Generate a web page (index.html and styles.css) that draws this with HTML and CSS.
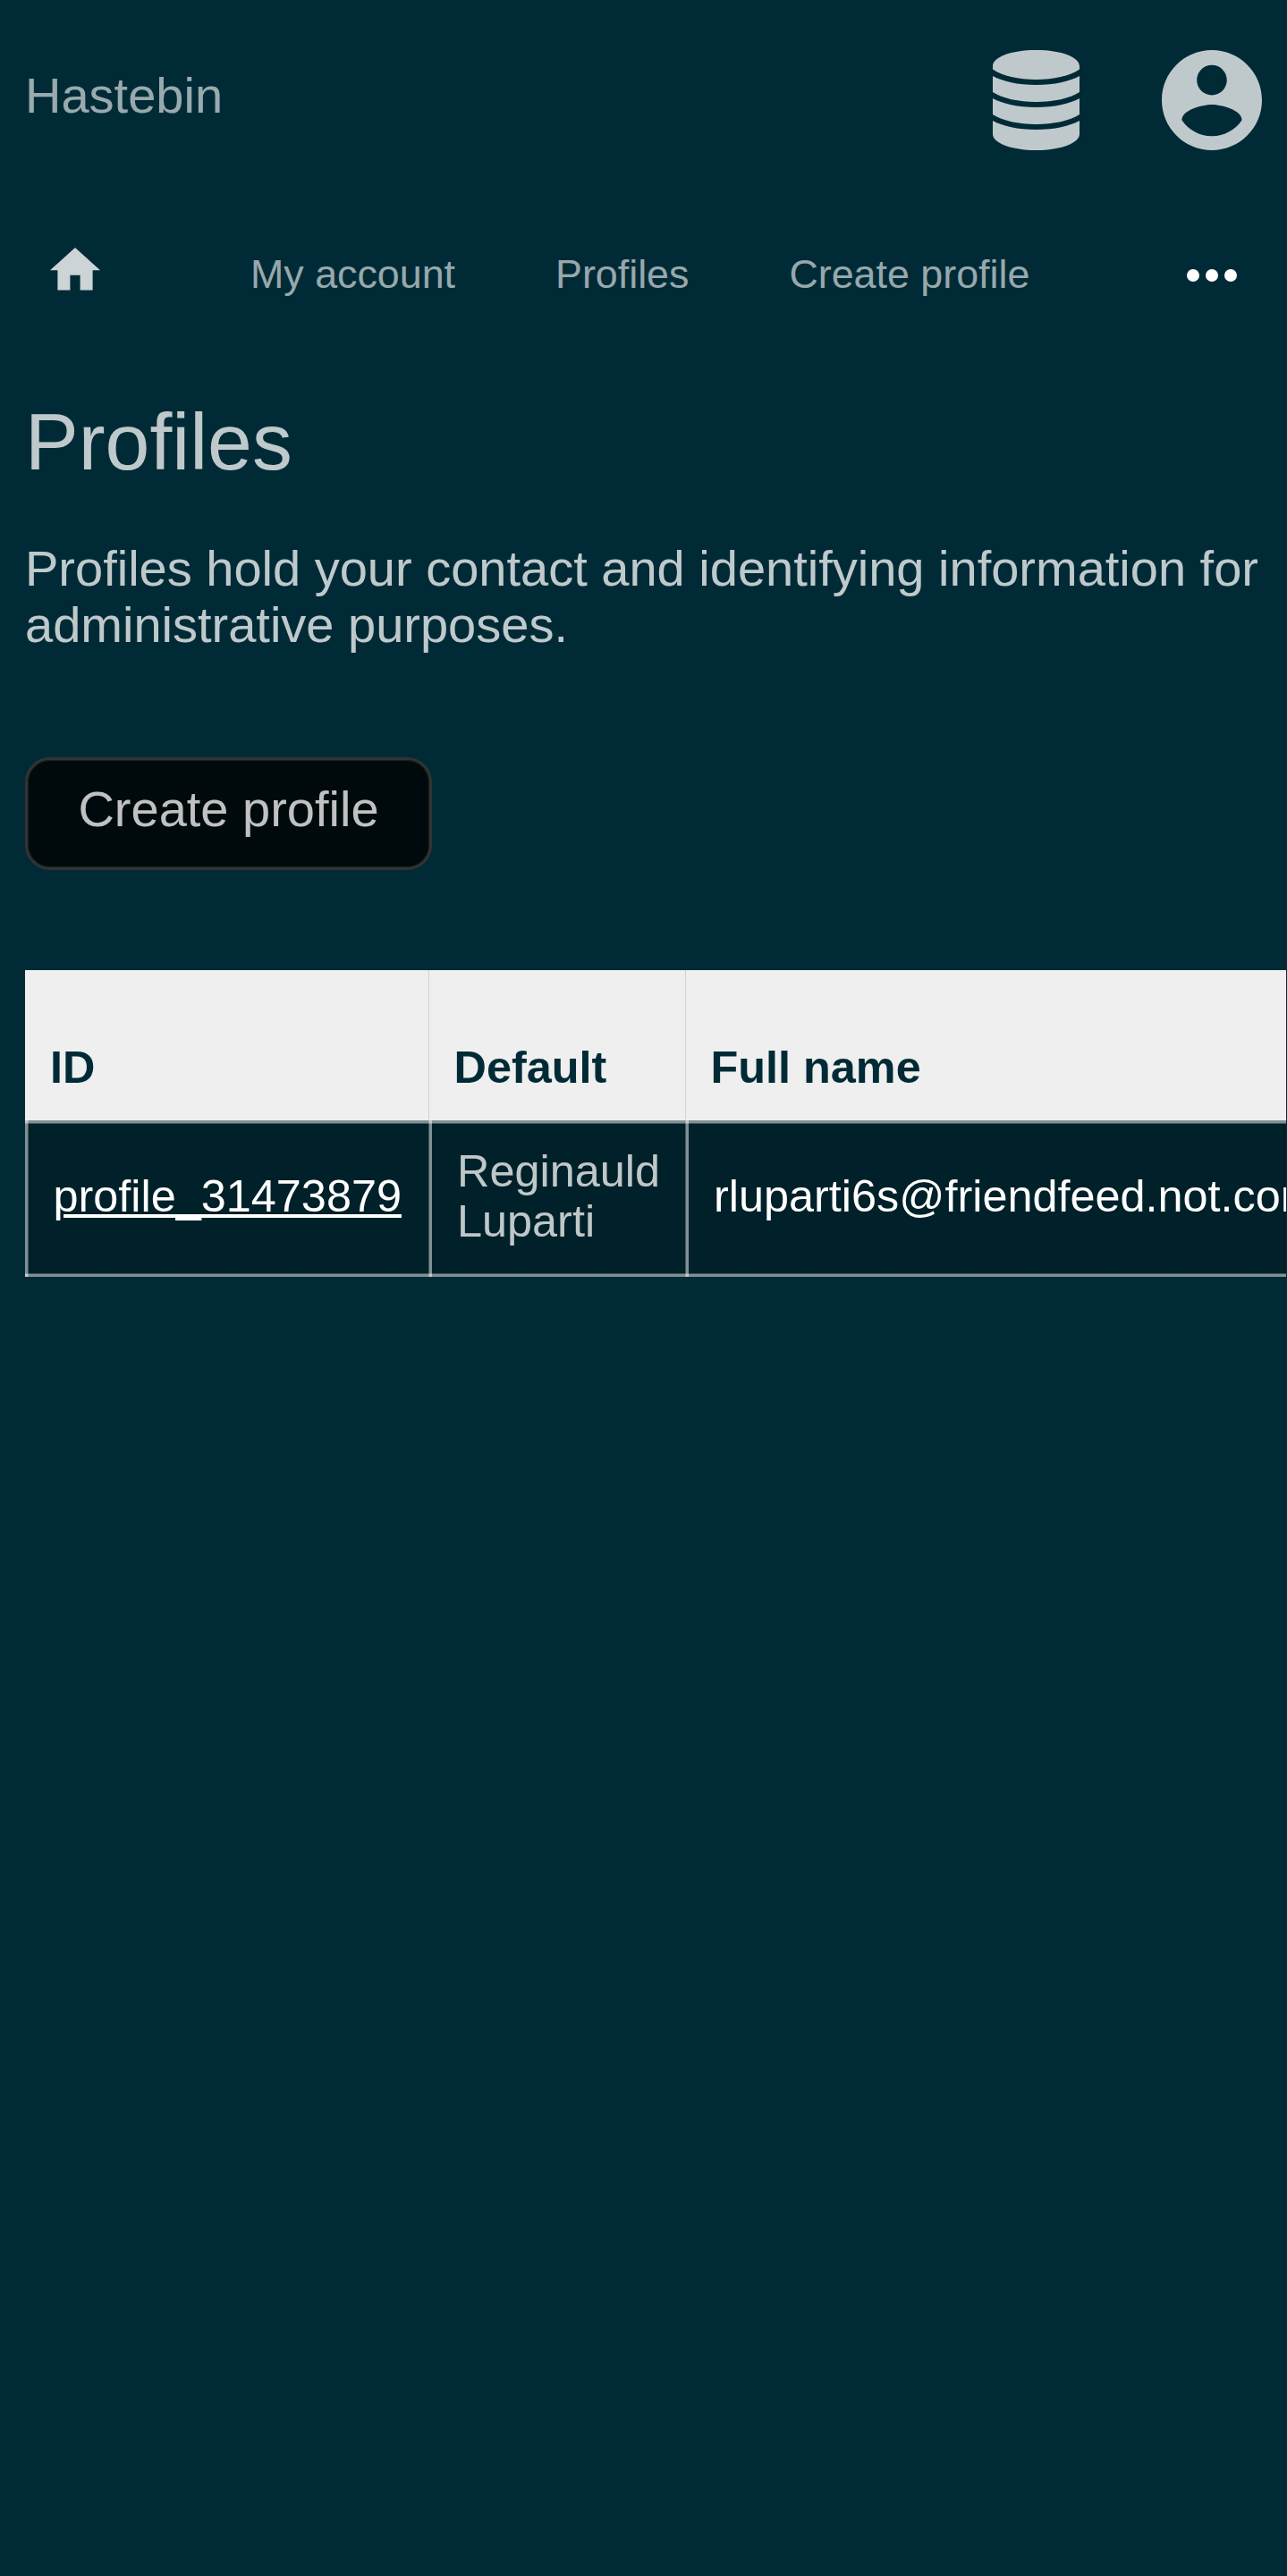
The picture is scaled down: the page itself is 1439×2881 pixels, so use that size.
FILE: index.html
```html
<!DOCTYPE html>
<html lang="en">
<head>
<meta charset="utf-8">
<title>Profiles</title>
<link rel="stylesheet" href="styles.css">
</head>
<body>
<header class="topbar">
  <a class="brand">Hastebin</a>
  <div class="actions">
    <svg class="icon-db" viewBox="0 0 97 112"><path d="M0 21.500V18C0 8 20 0 48.500 0S97 8 97 18V21.500C86 29 68 33 48.500 33S11 29 0 21.500zM0 29C11 35 28 39 48.500 39S86 35 97 29V47C86 54 68 58 48.500 58S11 54 0 47zM0 54C11 60 28 64 48.500 64S86 60 97 54V72C86 79 68 83 48.500 83S11 79 0 72zM0 79C11 85 28 89 48.500 89S86 85 97 79V94C97 104 76 112 48.500 112S0 104 0 94z"/></svg>
    <svg class="icon-user" viewBox="2 2 20 20"><path d="M12 2C6.480 2 2 6.480 2 12s4.480 10 10 10 10-4.480 10-10S17.520 2 12 2zm0 3c1.660 0 3 1.340 3 3s-1.340 3-3 3-3-1.340-3-3 1.340-3 3-3zm0 14.200c-2.500 0-4.710-1.280-6-3.220.03-1.990 4-3.080 6-3.080 1.990 0 5.970 1.090 6 3.080-1.290 1.940-3.500 3.220-6 3.220z"/></svg>
  </div>
</header>
<nav class="nav">
  <svg class="icon-home" viewBox="2 3 20 17"><path d="M10 20v-6h4v6h5v-8h3L12 3 2 12h3v8z"/></svg>
  <div class="links"><a>My account</a><a>Profiles</a><a>Create profile</a></div>
  <svg class="icon-more" viewBox="0 0 56 14"><circle cx="7" cy="7" r="7"/><circle cx="28" cy="7" r="7"/><circle cx="49" cy="7" r="7"/></svg>
</nav>
<main class="content">
  <h1>Profiles</h1>
  <p>Profiles hold your contact and identifying information for administrative purposes.</p>
  <button class="create">Create profile</button>
  <div class="table-wrap">
    <table>
      <thead><tr><th>ID</th><th>Default</th><th>Full name</th></tr></thead>
      <tbody><tr>
        <td><a class="link">profile_31473879</a></td>
        <td>Reginauld Luparti</td>
        <td class="mail">rluparti6s@friendfeed.not.com</td>
      </tr></tbody>
    </table>
  </div>
</main>
</body>
</html>
```
FILE: styles.css
```css
* { box-sizing: border-box; }
body {
  margin: 0;
  min-height: 2881px;
  background: #002b36;
  color: rgba(255, 255, 255, .75);
  font: 56px/63px "Liberation Sans", Arial, sans-serif;
  overflow-x: hidden;
}
svg { display: block; fill: currentColor; }
.topbar {
  display: flex;
  justify-content: space-between;
  height: 224px;
  padding: 56px 28px 0;
}
.brand { padding-top: 19px; color: rgba(255, 255, 255, .6); }
.actions { display: flex; gap: 92px; }
.icon-db { width: 97px; height: 112px; }
.icon-user { width: 112px; height: 112px; }
.nav {
  display: flex;
  align-items: flex-start;
  height: 168px;
  padding: 53px 56px 0;
}
.icon-home { width: 56px; height: 47.600px; color: rgba(255, 255, 255, .8); }
.links {
  display: flex;
  gap: 112px;
  flex: 1;
  margin-left: 168px;
  padding-top: 4px;
  color: rgba(255, 255, 255, .6);
  font-size: 44.800px;
  line-height: 50px;
}
.icon-more { width: 56px; height: 14px; margin-top: 24px; color: #fff; }
.content { padding-left: 28px; }
h1 { margin: 51px 0 0; font-size: 89.600px; line-height: 102px; font-weight: 400; }
p { margin: 59px 0 0; }
.create {
  display: block;
  margin-top: 117px;
  width: 455px;
  height: 126px;
  padding: 0 0 11px;
  border: 3px solid #333;
  border-radius: 28px;
  background: #000a0c;
  box-shadow: inset 0 0 0 1px rgba(51, 51, 51, .5);
  color: rgba(255, 255, 255, .75);
  font: inherit;
}
.table-wrap { width: 1410px; margin-top: 112px; overflow: hidden; }
table {
  width: 1500px;
  table-layout: fixed;
  border-spacing: 0;
  font-size: 50.400px;
  line-height: 56px;
}
th {
  height: 168px;
  padding: 49px 28px 0;
  background: #efefef;
  color: #002b36;
  text-align: left;
}
th:nth-child(1) { width: 451px; }
th:nth-child(2) { width: 287px; }
th + th { padding-left: 28.500px; box-shadow: inset 1px 0 #cfd4d4; }
td {
  --solid: rgba(255, 255, 255, .5);
  --soft: rgba(255, 255, 255, .25);
  --side: linear-gradient(to right, var(--solid) 3px, var(--soft) 3px);
  height: 175px;
  padding: 0 24px 5px 31.500px;
  background:
    var(--side) left / 4px 100% no-repeat,
    linear-gradient(var(--solid) 3px, var(--soft) 3px) top / 100% 4px no-repeat,
    linear-gradient(var(--soft) 1px, var(--solid) 1px) bottom / 100% 4px no-repeat,
    #002129;
  vertical-align: middle;
}
td + td {
  --side: linear-gradient(to right, var(--soft) 1px, var(--solid) 1px);
  padding-left: 32px;
}
.link {
  color: #fff;
  text-decoration: underline;
  text-decoration-thickness: 3.500px;
  text-underline-offset: 3px;
}
.mail { color: #fff; white-space: nowrap; }
```
